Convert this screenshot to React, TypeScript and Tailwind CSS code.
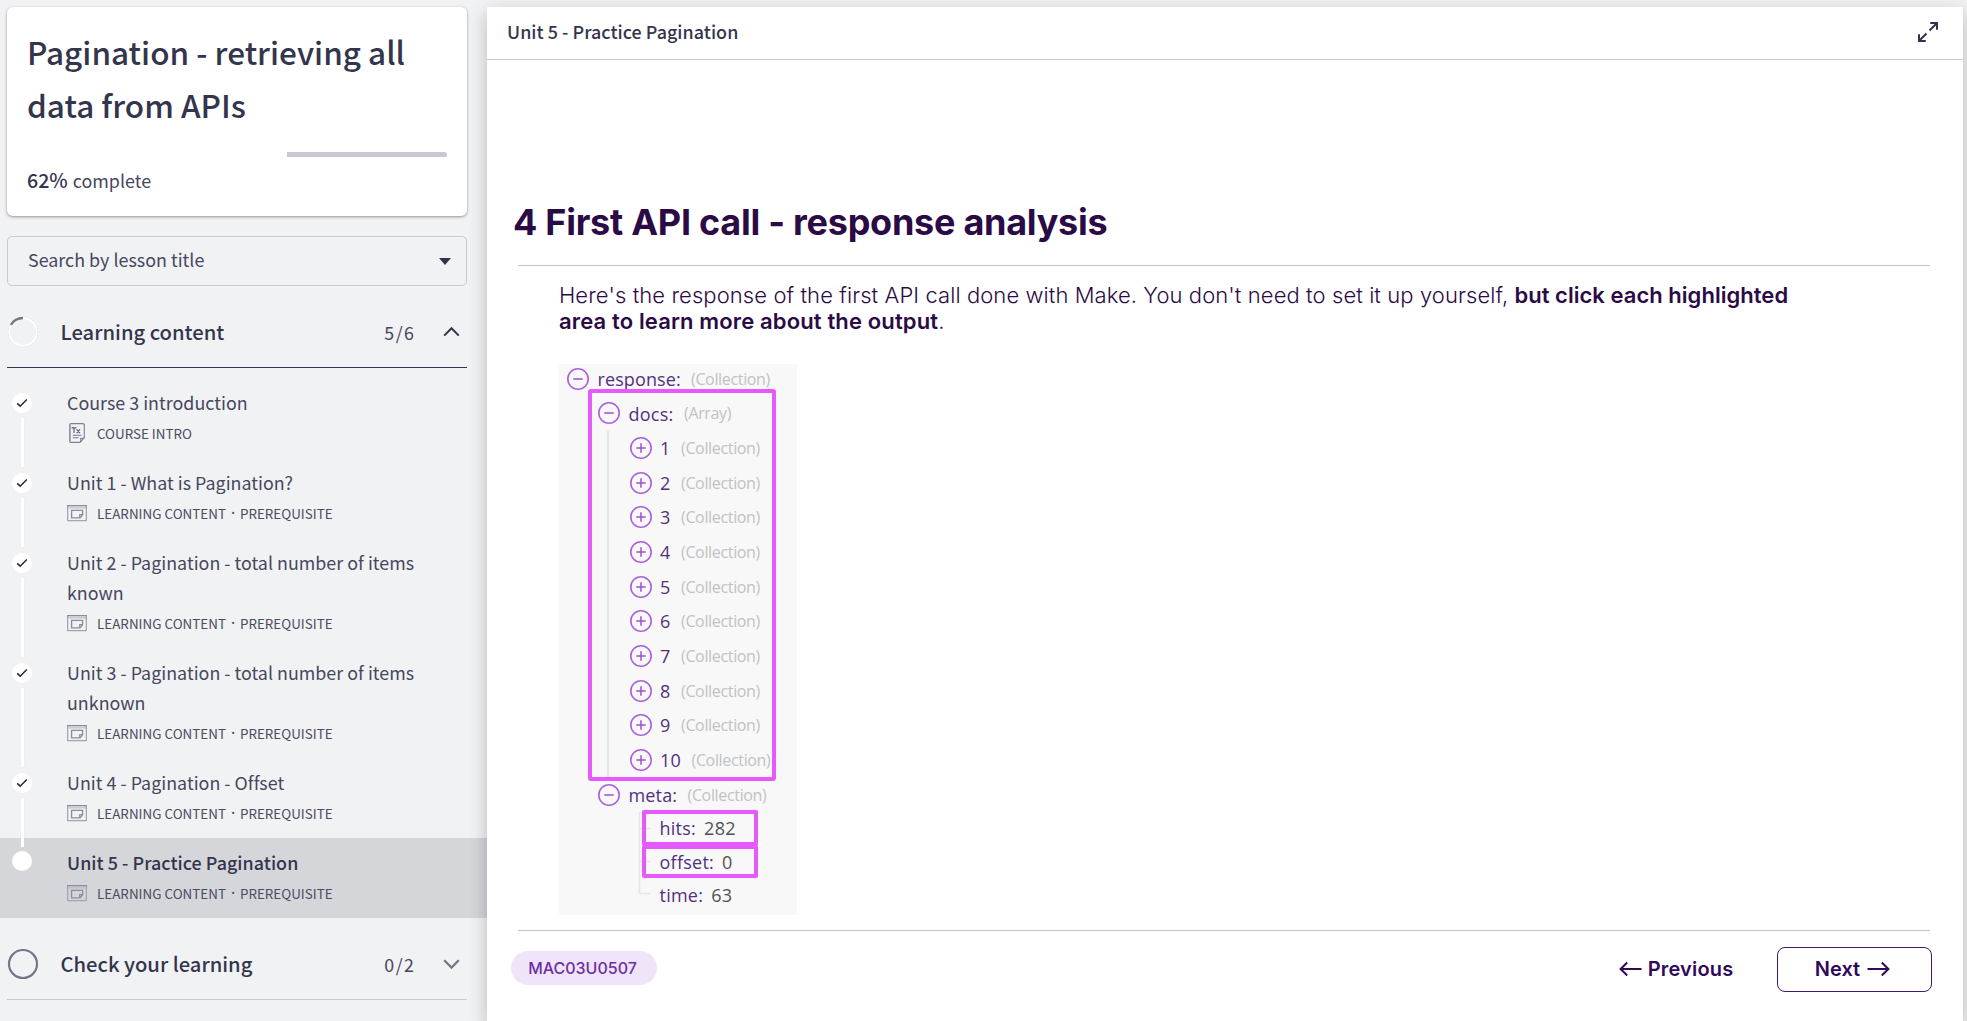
import type { ReactNode } from "react";

type Lesson = { title: ReactNode; kind: "intro" | "content"; active?: boolean; last?: boolean };

const lessons: Lesson[] = [
  { title: "Course 3 introduction", kind: "intro" },
  { title: "Unit 1 - What is Pagination?", kind: "content" },
  { title: <>Unit 2 - Pagination - total number of items<br />known</>, kind: "content" },
  { title: <>Unit 3 - Pagination - total number of items<br />unknown</>, kind: "content" },
  { title: "Unit 4 - Pagination - Offset", kind: "content" },
  { title: "Unit 5 - Practice Pagination", kind: "content", active: true, last: true },
];

function IntroIcon() {
  return (
    <svg width="20" height="20" viewBox="0 0 20 20" fill="none" className="shrink-0">
      <path d="M4.2 .7H15.8Q17.4 .7 17.4 2.3V14.6L12.9 19.3H4.2Q2.6 19.3 2.6 17.7V2.3Q2.6 .7 4.2 .7Z" stroke="#7c8292" strokeWidth="1.2" />
      <path d="M2.6 2.5V17.5" stroke="#c59a78" strokeWidth=".7" />
      <path d="M17.4 2.5V14.5M3.4 2V18" stroke="#7ba4c8" strokeWidth=".8" />
      <path d="M17.2 15.2H13.8V19M5.8 12.2H14.4M5.8 14.8H11.6" stroke="#747a8a" strokeWidth="1.1" />
      <path d="M4.6 4.8H9.4M7 4.8V10M9.6 6.3L13 10M13 6.3L9.6 10" stroke="#5a6072" strokeWidth="1.2" />
    </svg>
  );
}

function ContentIcon() {
  return (
    <svg width="20" height="20" viewBox="0 0 20 20" fill="none" className="shrink-0">
      <rect x=".6" y="2.6" width="18.8" height="15" rx=".6" stroke="#a4a5b2" strokeWidth="1.3" />
      <path d="M0 2.6H20" stroke="#8b8c9b" strokeWidth="1.2" />
      <path d="M1 4.9H19" stroke="#b4b5c0" strokeWidth="1" />
      <path d="M4.6 7.4H15.6V11.8L13 14.8H4.6Z" stroke="#8b8c9b" strokeWidth="1.3" />
      <path d="M15.6 11.6H12.7V14.8" stroke="#8b8c9b" strokeWidth="1.1" />
    </svg>
  );
}

function LessonRow({ lesson }: { lesson: Lesson }) {
  return (
    <div className={lesson.active ? "flex gap-[35px] bg-[#d5d6da] pl-3" : "flex gap-[35px] pl-3"}>
      <div className={lesson.active ? "relative w-5 shrink-0 pt-[13px]" : "relative w-5 shrink-0 pt-[15px]"}>
        <div className="flex size-5 items-center justify-center rounded-full bg-white">
          {!lesson.active && (
            <svg width="12" height="10" viewBox="0 0 12 10" fill="none">
              <path d="M1.2 5.3L4.2 8.2L10.8 1.5" stroke="#2b2d38" strokeWidth="1.6" />
            </svg>
          )}
        </div>
        {!lesson.last && <div className="absolute top-10 -bottom-[9px] left-[9px] z-10 w-[2.5px] bg-white shadow-[0_0_1px_#cfd1d6]" />}
      </div>
      <div className="pt-[8.5px] pb-[10.5px]">
        <div className={lesson.active ? "text-[17.9px] leading-[30px] font-medium tracking-[0.04px] text-[#33354d]" : "text-[17.85px] leading-[30px] tracking-[0.02px] text-[#45475e]"}>
          {lesson.title}
        </div>
        <div className="mt-px flex h-[30px] items-center gap-[10px] text-[13.4px] leading-[30px] text-[#4a4c62]">
          {lesson.kind === "intro" ? <IntroIcon /> : <ContentIcon />}
          {lesson.kind === "intro" ? (
            <span>COURSE INTRO</span>
          ) : (
            <span className="flex whitespace-nowrap">
              <span className="tracking-[0.02px]">LEARNING CONTENT</span>
              <span className="w-[14px] text-center font-['Open_Sans'] font-semibold">·</span>
              <span>PREREQUISITE</span>
            </span>
          )}
        </div>
      </div>
    </div>
  );
}

function SectionHeader({ title, count, open }: { title: string; count: string; open?: boolean }) {
  return (
    <div className={`mx-[7px] mt-[11px] flex h-[71px] items-center border-b pr-[7.5px] ${open ? "border-[#33374f]" : "border-[#c7c9d3]"}`}>
      <svg width="32" height="32" viewBox="0 0 32 32" fill="none" className="shrink-0">
        {open ? (
          <>
            <circle cx="16" cy="16" r="14.6" stroke="#b9bbc3" strokeWidth=".8" strokeDasharray="1.5 1.5" />
            <circle cx="16" cy="16" r="13.8" stroke="#fff" strokeWidth="1.8" />
            <path d="M3.9 9A14 14 0 0 1 16 2" stroke="#74768a" strokeWidth="2.4" />
          </>
        ) : (
          <circle cx="16" cy="16" r="14" stroke="#74768a" strokeWidth="2.2" />
        )}
      </svg>
      <span className="ml-[21.5px] grow text-[20.2px] leading-[30px] font-medium text-[#33354d]">{title}</span>
      <span className="text-[17.8px] leading-[30px] tracking-[1.5px] text-[#45475e]">{count}</span>
      <svg width="17" height="12" viewBox="0 0 17 12" fill="none" className="ml-[27px] shrink-0">
        {open ? (
          <path d="M1.2 9.6L8.5 2.2L15.8 9.6" stroke="#33354d" strokeWidth="2" />
        ) : (
          <path d="M1.2 2.2L8.5 9.6L15.8 2.2" stroke="#74768a" strokeWidth="2.2" />
        )}
      </svg>
    </div>
  );
}

function Toggle({ plus }: { plus?: boolean }) {
  return (
    <svg width="22" height="22" viewBox="0 0 22 22" fill="none" className="shrink-0">
      <circle cx="11" cy="11" r="10.2" stroke="#ab5fe0" strokeWidth="1.6" />
      <path d={plus ? "M6.3 11H15.7M11 6.3V15.7" : "M6.3 11H15.7"} stroke="#9d4fd6" strokeWidth="1.5" />
    </svg>
  );
}

function Kind({ children }: { children: ReactNode }) {
  return <span className="text-[16px] tracking-[-0.34px] text-[#c0c2c4]">{children}</span>;
}

function ResponseTree() {
  return (
    <div className="relative ml-[72px] flex h-[551px] w-[238px] flex-col bg-[#f8f8f8] font-['Open_Sans',sans-serif] text-[18px] leading-6 text-[#52307c]">
      <svg width="238" height="551" viewBox="0 0 238 551" fill="none" className="absolute top-0 left-0">
        <path d="M49 67V413" stroke="#e6e6e9" strokeWidth="2" />
        <path d="M80.5 448V529.5H92M80.5 464.5H92M80.5 497.5H92" stroke="#e4e4e9" strokeWidth="1.5" />
      </svg>
      <div className="flex h-8 items-center pb-[2px] pl-[8px]">
        <Toggle />
        <span className="ml-[8.5px] w-[93.5px] tracking-[0.1px]">response:</span>
        <Kind>(Collection)</Kind>
      </div>
      <div className="flex h-[34.67px] items-center pl-[39px]">
        <Toggle />
        <span className="mt-px ml-[8.5px] w-[55.5px] tracking-[0.25px]">docs:</span>
        <Kind>(Array)</Kind>
      </div>
      {[1, 2, 3, 4, 5, 6, 7, 8, 9, 10].map((n) => (
        <div key={n} className="flex h-[34.67px] items-center pl-[70.5px]">
          <Toggle plus />
          <span className={n === 10 ? "ml-[8.5px] w-[31.5px] tracking-[0.3px]" : "ml-[8.5px] w-[21px]"}>{n}</span>
          <Kind>(Collection)</Kind>
        </div>
      ))}
      <div className="flex h-[34.67px] items-center pl-[39px]">
        <Toggle />
        <span className="ml-[8.5px] w-[59px] tracking-[0.15px]">meta:</span>
        <Kind>(Collection)</Kind>
      </div>
      {[["hits:", "282"], ["offset:", "0"], ["time:", "63"]].map(([key, value]) => (
        <div key={key} className="flex h-[33.1px] items-center gap-2 pl-[100.5px]">
          <span className="tracking-[0.25px]">{key}</span>
          <span className="tracking-[0.3px] text-[#4f5254]">{value}</span>
        </div>
      ))}
      <div className="absolute top-[25px] left-[29px] h-[392px] w-[188px] rounded-[3px] border-4 border-[#e659fb]" />
      <div className="absolute top-[446px] left-[83px] h-[36px] w-[116px] rounded-[2px] border-4 border-[#e659fb]" />
      <div className="absolute top-[481px] left-[83px] h-[33px] w-[116px] rounded-[2px] border-4 border-[#e659fb]" />
    </div>
  );
}

function Arrow({ left }: { left?: boolean }) {
  return (
    <svg width="23" height="16" viewBox="0 0 23 16" fill="none" className={left ? "" : "rotate-180"}>
      <path d="M22.5 8H1.8M8.2 1.5L1.6 8L8.2 14.5" stroke="#2f0a5b" strokeWidth="2" />
    </svg>
  );
}

export default function App() {
  return (
    <div className="flex h-[1021px] w-[1967px] overflow-hidden bg-[#f1f2f4] font-['Noto_Sans_CJK_SC',sans-serif]">
      <aside className="flex w-[487px] shrink-0 flex-col pt-[7px]">
        <div className="mx-[7px] mr-5 h-[209px] rounded-md bg-white pt-[18px] pr-5 pl-5 shadow-[0_1px_3px_rgba(0,0,0,0.4)]">
          <h1 className="text-[31.5px] leading-[53px] font-medium text-[#33354d]">
            Pagination - retrieving all<br />data from APIs
          </h1>
          <div className="mt-[21px] flex h-[5px] justify-end overflow-hidden rounded-full">
            <div className="h-full w-[160px] bg-[#c7c9d3]" />
          </div>
          <div className="mt-[8px] flex items-baseline gap-[5px] text-[17.9px] leading-[30px] text-[#45475e]">
            <span className="text-[19.6px] leading-[30px] font-medium text-[#33354d]">62%</span>
            <span>complete</span>
          </div>
        </div>
        <div className="mx-[7px] mt-5 mr-5 flex h-[50px] items-center justify-between rounded-[5px] border border-[#c7c9d3] pr-[15px] pl-5 text-[17.9px] text-[#45475e]">
          <span className="pb-[3px]">Search by lesson title</span>
          <svg width="12" height="7" viewBox="0 0 12 7"><path d="M0 0H12L6 7Z" fill="#33354d" /></svg>
        </div>
        <div className="mr-[13px]"><SectionHeader title="Learning content" count="5/6" open /></div>
        <div className="mt-[10px]">
          {lessons.map((lesson, i) => <LessonRow key={i} lesson={lesson} />)}
        </div>
        <div className="mr-[13px]"><SectionHeader title="Check your learning" count="0/2" /></div>
      </aside>
      <main className="z-20 mt-[7px] flex w-[1476px] shrink-0 flex-col bg-white shadow-[0_6px_17px_rgba(0,0,0,0.24)]">
        <header className="flex h-[53px] shrink-0 items-center justify-between border-b border-[#c7c9d3] pr-[24px] pl-5">
          <span className="pb-1 text-[17.9px] leading-[30px] font-medium tracking-[0.04px] text-[#33354d]">Unit 5 - Practice Pagination</span>
          <svg width="22" height="22" viewBox="0 0 22 22" fill="none" stroke="#33354d" strokeWidth="2" className="-mt-[3px]">
            <path d="M12.5 9.5L19.8 2.2M13.2 2H20V8.8M9.5 12.5L2.2 19.8M2 13.2V20H8.8" />
          </svg>
        </header>
        <section className="flex flex-col font-['Inter',sans-serif] text-[#2b0b45]">
          <h2 className="mt-[137px] ml-[26px] text-[36px] leading-[50px] font-bold tracking-[-0.26px]">4 First API call - response analysis</h2>
          <div className="mt-[18px] ml-[31px] h-px w-[1412px] bg-[#cbc6c8] shadow-[0_0_1px_#cbc6c8]" />
          <div className="mx-[31px] flex flex-col">
            <p className="mt-4 ml-[41px] text-[22px] leading-[26px] font-light whitespace-nowrap">
              <span className="tracking-[0.085px]">Here's the response of the first API call done with Make. You don't need to set it up yourself, </span>
              <b className="font-semibold tracking-[0.03px]">but click each highlighted<br /><span className="tracking-[0.14px]">area to learn more about the output</span></b>.
            </p>
            <div className="-ml-[31px] mt-[30px]"><ResponseTree /></div>
          </div>
          <div className="mt-[15px] ml-[31px] h-px w-[1412px] bg-[#cbc6c8] shadow-[0_0_1px_#cbc6c8]" />
          <div className="mt-4 mr-[31px] ml-6 flex h-[45px] items-center text-[20px] font-semibold text-[#2f0a5b]">
            <span className="-mt-[3px] flex h-[34px] w-[146px] items-center justify-center rounded-full bg-[#f0e4fa] pr-[3px] text-[16px] font-medium text-[#6b2fa0]">MAC03U0507</span>
            <span className="-mt-px mr-[43.5px] ml-auto flex items-center gap-[6px] tracking-[0.2px]"><Arrow left />Previous</span>
            <span className="flex h-[45px] w-[155px] items-center justify-center gap-[7px] rounded-lg border-[1.5px] border-[#3f1a70] pr-[4px] pb-[2px]">Next<Arrow /></span>
          </div>
        </section>
      </main>
    </div>
  );
}
